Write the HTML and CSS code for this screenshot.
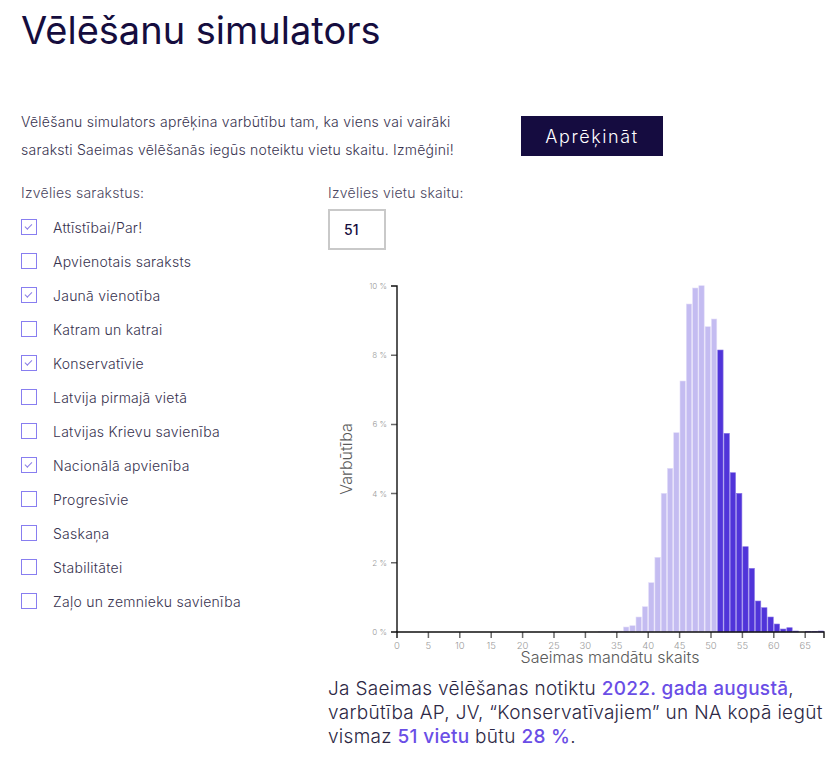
FILE: index.html
```html
<!DOCTYPE html>
<html lang="lv">
<head>
<meta charset="utf-8">
<title>Vēlēšanu simulators</title>
<link rel="stylesheet" href="styles.css">
</head>
<body>
<main class="page">
  <h1 class="title">Vēlēšanu simulators</h1>
  <div class="intro">
    <p class="desc">Vēlēšanu simulators aprēķina varbūtību tam, ka viens vai vairāki saraksti Saeimas vēlēšanās iegūs noteiktu vietu skaitu. Izmēģini!</p>
    <button class="calc" type="button">Aprēķināt</button>
  </div>
  <div class="cols">
    <section class="lists">
      <div class="label">Izvēlies sarakstus:</div>
      <ul class="checks">
        <li class="check"><span class="box checked"></span><span class="name">Attīstībai/Par!</span></li>
        <li class="check"><span class="box"></span><span class="name">Apvienotais saraksts</span></li>
        <li class="check"><span class="box checked"></span><span class="name">Jaunā vienotība</span></li>
        <li class="check"><span class="box"></span><span class="name">Katram un katrai</span></li>
        <li class="check"><span class="box checked"></span><span class="name">Konservatīvie</span></li>
        <li class="check"><span class="box"></span><span class="name">Latvija pirmajā vietā</span></li>
        <li class="check"><span class="box"></span><span class="name">Latvijas Krievu savienība</span></li>
        <li class="check"><span class="box checked"></span><span class="name">Nacionālā apvienība</span></li>
        <li class="check"><span class="box"></span><span class="name">Progresīvie</span></li>
        <li class="check"><span class="box"></span><span class="name">Saskaņa</span></li>
        <li class="check"><span class="box"></span><span class="name">Stabilitātei</span></li>
        <li class="check"><span class="box"></span><span class="name">Zaļo un zemnieku savienība</span></li>
      </ul>
    </section>
    <section class="right">
      <div class="label">Izvēlies vietu skaitu:</div>
      <div class="seats">51</div>
      <svg class="chart" width="509" height="398" viewBox="0 0 509 398">
        <g class="bars-light">
          <rect x="270.4" y="361.3" width="5.4" height="0.7"/>
          <rect x="276.6" y="361.6" width="5.4" height="0.4"/>
          <rect x="282.9" y="361" width="5.4" height="1"/>
          <rect x="289.2" y="361" width="5.4" height="1"/>
          <rect x="295.5" y="357" width="5.4" height="5"/>
          <rect x="301.8" y="355.7" width="5.4" height="6.3"/>
          <rect x="308.0" y="347" width="5.4" height="15"/>
          <rect x="314.3" y="336.7" width="5.4" height="25.3"/>
          <rect x="320.6" y="312.7" width="5.4" height="49.3"/>
          <rect x="326.9" y="287.3" width="5.4" height="74.7"/>
          <rect x="333.2" y="223.3" width="5.4" height="138.7"/>
          <rect x="339.4" y="198.3" width="5.4" height="163.7"/>
          <rect x="345.7" y="162.7" width="5.4" height="199.3"/>
          <rect x="352.0" y="111" width="5.4" height="251"/>
          <rect x="358.3" y="34" width="5.4" height="328"/>
          <rect x="364.6" y="18" width="5.4" height="344"/>
          <rect x="370.8" y="15.7" width="5.4" height="346.3"/>
          <rect x="377.1" y="56.7" width="5.4" height="305.3"/>
          <rect x="383.4" y="49" width="5.4" height="313"/>
        </g>
        <g class="bars-dark">
          <rect x="389.7" y="80" width="5.4" height="282"/>
          <rect x="396.0" y="163.3" width="5.4" height="198.7"/>
          <rect x="402.2" y="202.7" width="5.4" height="159.3"/>
          <rect x="408.5" y="223.3" width="5.4" height="138.7"/>
          <rect x="414.8" y="276.7" width="5.4" height="85.3"/>
          <rect x="421.1" y="298.3" width="5.4" height="63.7"/>
          <rect x="427.4" y="331" width="5.4" height="31"/>
          <rect x="433.6" y="337.7" width="5.4" height="24.3"/>
          <rect x="439.9" y="347" width="5.4" height="15"/>
          <rect x="446.2" y="354" width="5.4" height="8"/>
          <rect x="452.5" y="359" width="5.4" height="3"/>
          <rect x="458.8" y="357.7" width="5.4" height="4.3"/>
          <rect x="465.0" y="361" width="5.4" height="1"/>
          <rect x="477.6" y="361.3" width="5.4" height="0.7"/>
          <rect x="483.9" y="361.3" width="5.4" height="0.7"/>
          <rect x="490.2" y="361" width="5.4" height="1"/>
        </g>
        <g class="ticks">
          <path d="M63,85.2H69M63,154.4H69M63,223.6H69M63,292.8H69"/>
          <path d="M100.4,362V368M131.8,362V368M163.2,362V368M194.6,362V368M226,362V368M257.4,362V368M288.8,362V368M320.2,362V368M351.6,362V368M383,362V368M414.4,362V368M445.8,362V368M477.2,362V368"/>
        </g>
        <path class="domain" d="M63,16H69V362H63"/>
        <path class="domain" d="M69,368V362H496V368"/>
        <g class="ytick-labels">
          <text x="59" y="19">10 %</text>
          <text x="59" y="88.2">8 %</text>
          <text x="59" y="157.4">6 %</text>
          <text x="59" y="226.6">4 %</text>
          <text x="59" y="295.8">2 %</text>
          <text x="59" y="365">0 %</text>
        </g>
        <g class="xtick-labels">
          <text x="69" y="378.5">0</text>
          <text x="100.4" y="378.5">5</text>
          <text x="131.8" y="378.5">10</text>
          <text x="163.2" y="378.5">15</text>
          <text x="194.6" y="378.5">20</text>
          <text x="226" y="378.5">25</text>
          <text x="257.4" y="378.5">30</text>
          <text x="288.8" y="378.5">35</text>
          <text x="320.2" y="378.5">40</text>
          <text x="351.6" y="378.5">45</text>
          <text x="383" y="378.5">50</text>
          <text x="414.4" y="378.5">55</text>
          <text x="445.8" y="378.5">60</text>
          <text x="477.2" y="378.5">65</text>
        </g>
        <text class="axis-title" x="282" y="393">Saeimas mandātu skaits</text>
        <text class="axis-title" transform="translate(24,189) rotate(-90)">Varbūtība</text>
      </svg>
      <p class="result">Ja Saeimas vēlēšanas notiktu <strong>2022. gada augustā</strong>, varbūtība AP, JV, “Konservatīvajiem” un NA kopā iegūt vismaz <strong>51 vietu</strong> būtu <strong>28 %</strong>.</p>
    </section>
  </div>
</main>
</body>
</html>
```

FILE: styles.css
```css
* { box-sizing: border-box; }

body {
  margin: 0;
  background: #ffffff;
  font-family: "Inter", "Liberation Sans", sans-serif;
  color: #38334f;
}

.page {
  padding: 6px 0 0 21px;
  width: 837px;
}

.title {
  margin: 0;
  font-size: 38px;
  line-height: 48px;
  font-weight: 400;
  color: #150d3e;
}

.intro {
  display: flex;
  align-items: center;
  margin-top: 54px;
}

.desc {
  margin: 0;
  width: 470px;
  font-size: 14px;
  letter-spacing: 0.25px;
  line-height: 28px;
  font-weight: 300;
  color: #38334f;
}

.calc {
  margin-left: 30px;
  width: 142px;
  height: 40px;
  border: 0;
  padding: 0;
  background: #150c40;
  color: #ffffff;
  font-family: inherit;
  font-size: 18px;
  font-weight: 300;
  letter-spacing: 1.6px;
}

.cols {
  display: flex;
  margin-top: 19px;
}

.lists {
  width: 307px;
}

.label {
  font-size: 14px;
  letter-spacing: 0.25px;
  line-height: 20px;
  font-weight: 300;
  color: #4a4560;
}

.checks {
  list-style: none;
  margin: 7px 0 0;
  padding: 0;
}

.check {
  display: flex;
  align-items: center;
  height: 34px;
  gap: 16px;
  font-size: 14px;
  letter-spacing: 0.25px;
  font-weight: 300;
  color: #38334f;
}

.box {
  position: relative;
  flex: none;
  width: 16px;
  height: 16px;
  border: 1.5px solid #887ef0;
  background: #fff;
}

.box.checked::after {
  content: "";
  position: absolute;
  left: 3px;
  top: 3.5px;
  width: 5.5px;
  height: 3px;
  border-left: 1.6px solid #8a7de6;
  border-bottom: 1.6px solid #8a7de6;
  transform: rotate(-45deg);
}

.right {
  display: flex;
  flex-direction: column;
  align-items: flex-start;
}

.seats {
  margin-top: 6px;
  width: 58px;
  height: 41px;
  border: 2px solid #c9c9c9;
  padding-left: 14px;
  font-size: 14px;
  line-height: 37px;
  font-weight: 500;
  color: #150d3e;
}

.chart {
  display: block;
  margin-top: 20px;
  font-family: "Inter", "Liberation Sans", sans-serif;
}

.bars-light rect {
  fill: #c4bcf1;
  stroke: #e3def9;
  stroke-width: 0.6;
}

.bars-dark rect {
  fill: #5034d9;
  stroke: #8a78e6;
  stroke-width: 0.6;
}

.ticks path {
  stroke: #6a6a6a;
  stroke-width: 1.5;
  fill: none;
}

.domain {
  stroke: #111111;
  stroke-width: 1.4;
  fill: none;
}

.ytick-labels text {
  font-size: 8px;
  fill: #9a9a9a;
  text-anchor: end;
  font-weight: 300;
}

.xtick-labels text {
  font-size: 9.5px;
  fill: #9a9a9a;
  text-anchor: middle;
  font-weight: 300;
}

.axis-title {
  font-size: 16px;
  fill: #5a5a5a;
  text-anchor: middle;
  font-weight: 300;
}

.result {
  margin: 9px 0 0;
  width: 505px;
  font-size: 19px;
  letter-spacing: 0.3px;
  line-height: 24px;
  font-weight: 300;
  color: #2c2744;
}

.result strong {
  font-weight: 500;
  color: #6a4ee6;
}
```
